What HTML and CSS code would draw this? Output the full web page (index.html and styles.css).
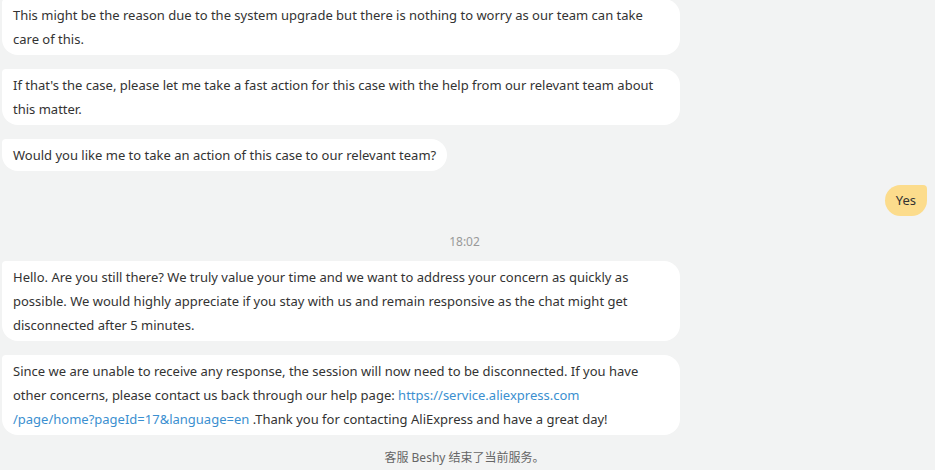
FILE: index.html
```html
<!DOCTYPE html>
<html>
<head>
<meta charset="utf-8">
<link rel="stylesheet" href="styles.css">
</head>
<body>
<div class="chat">
  <div class="msg in first"><div class="bubble">This might be the reason due to the system upgrade but there is nothing to worry as our team can take care of this.</div></div>
  <div class="msg in"><div class="bubble">If that's the case, please let me take a fast action for this case with the help from our relevant team about this matter.</div></div>
  <div class="msg in"><div class="bubble">Would you like me to take an action of this case to our relevant team?</div></div>
  <div class="msg out"><div class="bubble">Yes</div></div>
  <div class="time">18:02</div>
  <div class="msg in"><div class="bubble">Hello. Are you still there? We truly value your time and we want to address your concern as quickly as possible. We would highly appreciate if you stay with us and remain responsive as the chat might get disconnected after 5 minutes.</div></div>
  <div class="msg in"><div class="bubble">Since we are unable to receive any response, the session will now need to be disconnected. If you have other concerns, please contact us back through our help page: <a class="link" href="#">https://service.aliexpress.com<br>/page/home?pageId=17&amp;language=en</a> .Thank you for contacting AliExpress and have a great day!</div></div>
  <div class="notice">客服 Beshy 结束了当前服务。</div>
</div>
</body>
</html>
```

FILE: styles.css
```css
html, body {
  margin: 0;
  padding: 0;
  background: #f2f3f3;
}
body {
  font-family: "Noto Sans", "Noto Sans CJK SC", sans-serif;
  font-size: 13px;
  color: #333;
  width: 935px;
  height: 470px;
  overflow: hidden;
}
.chat {
  display: flex;
  flex-direction: column;
  padding: 0 8px 0 2px;
  margin-top: -1px;
}
.msg {
  display: flex;
  margin-bottom: 14px;
}
.msg.in { justify-content: flex-start; }
.msg.out { justify-content: flex-end; margin-bottom: 0; }
.bubble {
  background: #fff;
  line-height: 24px;
  padding: 4px 11px;
  max-width: 656px;
  border-radius: 4px 16px 16px 16px;
}
.msg.out .bubble {
  background: #fcdc8c;
  border-radius: 16px 4px 16px 16px;
  padding: 3px 11px 4px;
}
.link {
  color: #3b8fd0;
  text-decoration: none;
}
.time {
  text-align: center;
  font-size: 12px;
  color: #999;
  line-height: 16px;
  padding: 18px 0 11px;
}
.notice {
  text-align: center;
  font-size: 12px;
  color: #666;
  line-height: 16px;
  margin-top: 1px;
}
```
